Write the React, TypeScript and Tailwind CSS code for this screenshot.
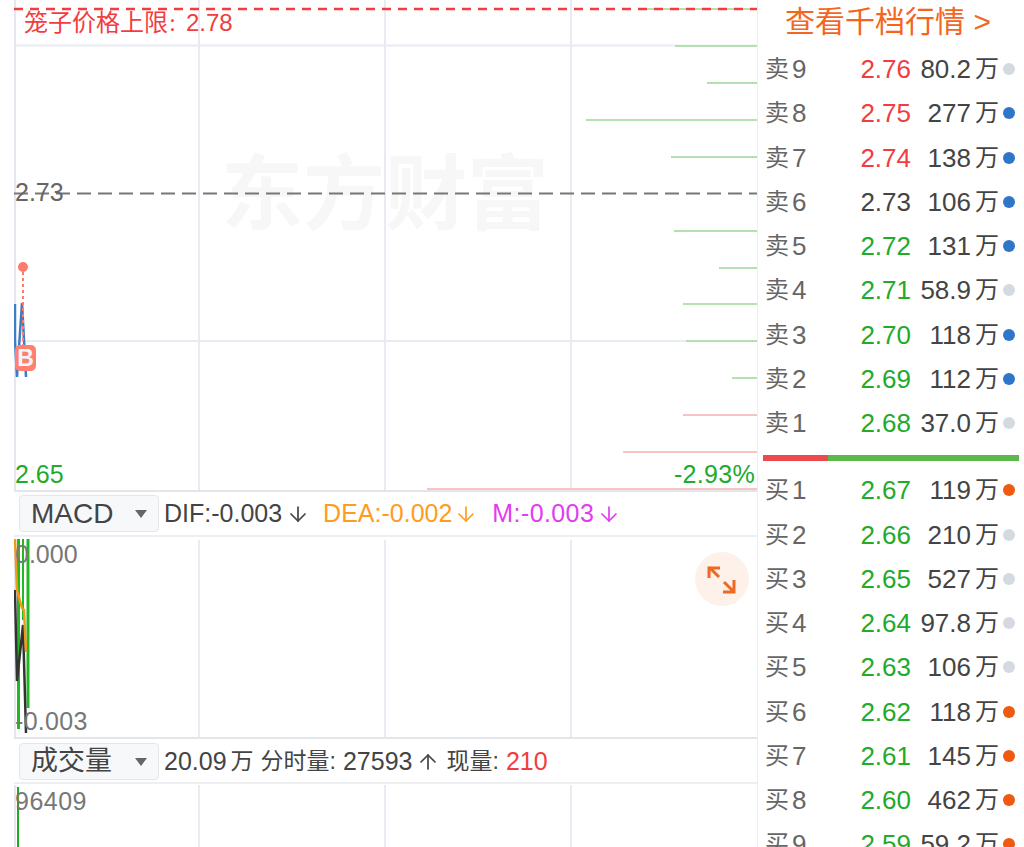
import React from "react";
import { ArrowDown, ArrowUp } from "lucide-react";

const RED = "text-[#f23c3f]";
const GREEN = "text-[#22aa2a]";
const DARK = "text-[#444444]";

type Level = { label: string; num: string; price: string; priceColor: string; vol: string; dot: string };

const GRAY_DOT = "bg-[#d5d9e0]";
const BLUE_DOT = "bg-[#2f76c9]";
const ORANGE_DOT = "bg-[#ee5a12]";

const sells: Level[] = [
  { label: "卖", num: "9", price: "2.76", priceColor: RED, vol: "80.2", dot: GRAY_DOT },
  { label: "卖", num: "8", price: "2.75", priceColor: RED, vol: "277", dot: BLUE_DOT },
  { label: "卖", num: "7", price: "2.74", priceColor: RED, vol: "138", dot: BLUE_DOT },
  { label: "卖", num: "6", price: "2.73", priceColor: DARK, vol: "106", dot: BLUE_DOT },
  { label: "卖", num: "5", price: "2.72", priceColor: GREEN, vol: "131", dot: BLUE_DOT },
  { label: "卖", num: "4", price: "2.71", priceColor: GREEN, vol: "58.9", dot: GRAY_DOT },
  { label: "卖", num: "3", price: "2.70", priceColor: GREEN, vol: "118", dot: BLUE_DOT },
  { label: "卖", num: "2", price: "2.69", priceColor: GREEN, vol: "112", dot: BLUE_DOT },
  { label: "卖", num: "1", price: "2.68", priceColor: GREEN, vol: "37.0", dot: GRAY_DOT },
];

const buys: Level[] = [
  { label: "买", num: "1", price: "2.67", priceColor: GREEN, vol: "119", dot: ORANGE_DOT },
  { label: "买", num: "2", price: "2.66", priceColor: GREEN, vol: "210", dot: GRAY_DOT },
  { label: "买", num: "3", price: "2.65", priceColor: GREEN, vol: "527", dot: GRAY_DOT },
  { label: "买", num: "4", price: "2.64", priceColor: GREEN, vol: "97.8", dot: GRAY_DOT },
  { label: "买", num: "5", price: "2.63", priceColor: GREEN, vol: "106", dot: GRAY_DOT },
  { label: "买", num: "6", price: "2.62", priceColor: GREEN, vol: "118", dot: ORANGE_DOT },
  { label: "买", num: "7", price: "2.61", priceColor: GREEN, vol: "145", dot: ORANGE_DOT },
  { label: "买", num: "8", price: "2.60", priceColor: GREEN, vol: "462", dot: ORANGE_DOT },
  { label: "买", num: "9", price: "2.59", priceColor: GREEN, vol: "59.2", dot: ORANGE_DOT },
];

// depth bars on the right side of the price chart: [y, start x]
const sellBars = [
  [9, 643], [46, 675], [83, 707], [120, 586], [157, 671],
  [231, 674], [268, 719], [304, 683], [341, 686], [378, 732],
];
const buyBars = [[415, 683], [452, 623], [489, 427]];

function DepthRow({ level }: { level: Level }) {
  return (
    <div className="flex h-[44.25px] shrink-0 items-center pr-[9px] pl-[7px]">
      <div className="flex flex-1 items-center text-[#666666]">
        <span className="text-[24px] leading-none">{level.label}</span>
        <span className="ml-[3px] text-[26px] leading-none">{level.num}</span>
      </div>
      <span className={`text-[26px] leading-none ${level.priceColor}`}>{level.price}</span>
      <div className="flex w-[88px] items-center justify-end text-[#444444]">
        <span className="text-[26px] leading-none">{level.vol}</span>
        <span className="ml-[4px] text-[24px] leading-none">万</span>
      </div>
      <span className={`ml-[4px] h-[12px] w-[12px] rounded-full ${level.dot}`} />
    </div>
  );
}

function IndicatorSelect({ label, size }: { label: string; size: string }) {
  return (
    <div className={`flex h-[37px] w-[140px] shrink-0 items-center justify-between rounded-[4px] border border-[#e3e6ea] bg-[#f7f8fa] pr-[11px] pl-[11px] text-[#444444] ${size}`}>
      <span className="leading-none">{label}</span>
      <span className="h-0 w-0 border-x-[6px] border-t-[8px] border-x-transparent border-t-[#666666]" />
    </div>
  );
}

function GridLines({ y1, y2 }: { y1: number; y2: number }) {
  return (
    <g stroke="#e8ebf2" strokeWidth="2">
      <line x1="199" x2="199" y1={y1} y2={y2} />
      <line x1="385" x2="385" y1={y1} y2={y2} />
      <line x1="571" x2="571" y1={y1} y2={y2} />
    </g>
  );
}

function PriceChart() {
  return (
    <div className="relative h-[492px] shrink-0 border-b-2 border-[#e3e5ea]">
      <span className="absolute top-[154px] left-[207px] text-[82px] leading-none font-bold whitespace-nowrap text-[#f7f7f7]">
        东方财富
      </span>
      <svg className="absolute inset-0 h-full w-full" viewBox="14 0 743 490">
        <GridLines y1={0} y2={490} />
        <line x1="15" x2="15" y1="0" y2="490" stroke="#e4e7ee" strokeWidth="2" />
        <line x1="14" x2="757" y1="45.5" y2="45.5" stroke="#e8ebf2" strokeWidth="2" />
        <line x1="14" x2="757" y1="341" y2="341" stroke="#e8ebf2" strokeWidth="2" />
        {sellBars.map(([y, x]) => (
          <line key={y} x1={x} x2="757" y1={y} y2={y} stroke="#b5e0b0" strokeWidth="2" />
        ))}
        {buyBars.map(([y, x]) => (
          <line key={y} x1={x} x2="757" y1={y} y2={y} stroke="#f7c4c4" strokeWidth="2" />
        ))}
        <line x1="14" x2="757" y1="9" y2="9" stroke="#f23c3f" strokeWidth="2.5" strokeDasharray="9 7" />
        <line x1="14" x2="757" y1="193.5" y2="193.5" stroke="#777777" strokeWidth="2" strokeDasharray="14 7" />
        <polyline points="15,304 15,340 17,377 22,303 26,377" fill="none" stroke="#3f7cc6" strokeWidth="2.5" />
        <circle cx="23" cy="267" r="5" fill="#ff7a6e" />
        <line x1="23" x2="23" y1="272" y2="365" stroke="#ff7a6e" strokeWidth="2" strokeDasharray="3 3" />
      </svg>
      <span className={`absolute top-[11px] left-[10px] text-[24px] leading-[24px] whitespace-nowrap ${RED}`}>
        笼子价格上限<span className="text-[18px]">：</span>2.78
      </span>
      <span className="absolute top-[180px] left-px text-[25px] leading-[24px] text-[#666666]">2.73</span>
      <span className={`absolute top-[462px] left-px text-[25px] leading-[24px] ${GREEN}`}>2.65</span>
      <span className={`absolute top-[462px] right-[2px] text-[25px] leading-[24px] tracking-[0.3px] ${GREEN}`}>-2.93%</span>
      <span className="absolute top-[345px] left-px flex h-[26px] w-[21px] items-center justify-center rounded-[5px] bg-[#ff8070] text-[23px] leading-none font-bold text-[#f3f4f8]">
        B
      </span>
    </div>
  );
}

function MacdBar() {
  return (
    <div className="flex h-[45px] shrink-0 items-center border-b-2 border-[#eeeff2] pl-[5px] text-[25px] leading-none">
      <IndicatorSelect label="MACD" size="text-[28px]" />
      <div className="ml-[5px] flex items-center text-[#444444]">
        DIF:-0.003
        <ArrowDown className="ml-[4px]" size={24} strokeWidth={1.7} />
      </div>
      <div className="ml-[13px] flex items-center text-[#ff9c1f]">
        DEA:-0.002
        <ArrowDown className="ml-[2px]" size={24} strokeWidth={1.7} />
      </div>
      <div className="ml-[14px] flex items-center text-[#e23cf0]">
        <span className="tracking-[0.4px]">M:-0.003</span>
        <ArrowDown className="ml-[3px]" size={24} strokeWidth={1.7} />
      </div>
    </div>
  );
}

function MacdChart() {
  return (
    <div className="relative h-[202px] shrink-0 border-b-2 border-[#e3e5ea]">
      <svg className="absolute inset-0 h-full w-full" viewBox="14 537 743 200">
        <GridLines y1={540} y2={738} />
        <line x1="15" x2="15" y1="540" y2="738" stroke="#e4e7ee" strokeWidth="2" />
        <g stroke="#22b822" fill="none">
          <line x1="18.5" x2="18.5" y1="539" y2="729" strokeWidth="3" />
          <line x1="23" x2="23" y1="539" y2="620" strokeWidth="2" />
          <line x1="28" x2="28" y1="539" y2="708" strokeWidth="3" />
        </g>
        <polyline points="15,590 17,681 23,625 26,733" fill="none" stroke="#333333" strokeWidth="2.5" />
        <polyline points="15,539 17,590 22,608 24,610 26,652" fill="none" stroke="#f09a1a" strokeWidth="2.5" />
      </svg>
      <span className="absolute top-[5px] left-px text-[25px] leading-[24px] text-[#777777]">0.000</span>
      <span className="absolute top-[172px] left-px text-[25px] leading-[24px] tracking-[0.3px] text-[#777777]">-0.003</span>
      <div className="absolute top-[15px] right-[8px] h-[54px] w-[54px] rounded-full bg-[#fdf1ea]">
        <svg viewBox="0 0 54 54" className="h-full w-full" fill="none" stroke="#ee6a24" strokeWidth="3">
          <path d="M24 25 14 15M25 16H14V26" />
          <path d="M29 30 39 40M28 40H39V28" />
        </svg>
      </div>
    </div>
  );
}

function VolumeBar() {
  return (
    <div className="flex h-[45px] shrink-0 items-center border-b-2 border-[#eeeff2] pt-[2px] pl-[5px] text-[25px] leading-none text-[#444444]">
      <IndicatorSelect label="成交量" size="text-[27px]" />
      <span className="ml-[5px]">20.09</span>
      <span className="ml-[4px] text-[23px]">万</span>
      <span className="ml-[7px] text-[23px]">分时量:</span>
      <span className="ml-[7px]">27593</span>
      <ArrowUp className="ml-[4px]" size={24} strokeWidth={1.7} />
      <span className="ml-[6px] text-[23px]">现量:</span>
      <span className={`ml-[7px] ${RED}`}>210</span>
    </div>
  );
}

function VolumeChart() {
  return (
    <div className="relative h-[63px] shrink-0">
      <svg className="absolute inset-0 h-full w-full" viewBox="14 784 743 63">
        <GridLines y1={785} y2={847} />
        <line x1="15" x2="15" y1="785" y2="847" stroke="#e4e7ee" strokeWidth="2" />
        <line x1="18" x2="18" y1="787" y2="847" stroke="#1faa1f" strokeWidth="2" />
      </svg>
      <span className="absolute top-[5px] left-px text-[25px] leading-[24px] tracking-[0.5px] text-[#777777]">96409</span>
    </div>
  );
}

export default function App() {
  return (
    <div className="flex h-[847px] w-[1024px] overflow-hidden bg-white font-['Liberation_Sans','Noto_Sans_CJK_SC',sans-serif]">
      <div className="flex w-[757px] shrink-0 flex-col pl-[14px]">
        <PriceChart />
        <MacdBar />
        <MacdChart />
        <VolumeBar />
        <VolumeChart />
      </div>
      <div className="flex flex-1 flex-col border-l border-[#eceef2]">
        <div className="flex h-[47px] shrink-0 items-center justify-center pr-[6px] pb-[4px] text-[30px] leading-none whitespace-nowrap text-[#f4651e]">
          查看千档行情 &gt;
        </div>
        {sells.map((l) => (
          <DepthRow key={l.label + l.num} level={l} />
        ))}
        <div className="mx-[5px] mt-[10px] mb-[7px] flex h-[6px] shrink-0">
          <div className="w-[65px] bg-[#ec4a4e]" />
          <div className="flex-1 bg-[#5cb84a]" />
        </div>
        {buys.map((l) => (
          <DepthRow key={l.label + l.num} level={l} />
        ))}
      </div>
    </div>
  );
}
